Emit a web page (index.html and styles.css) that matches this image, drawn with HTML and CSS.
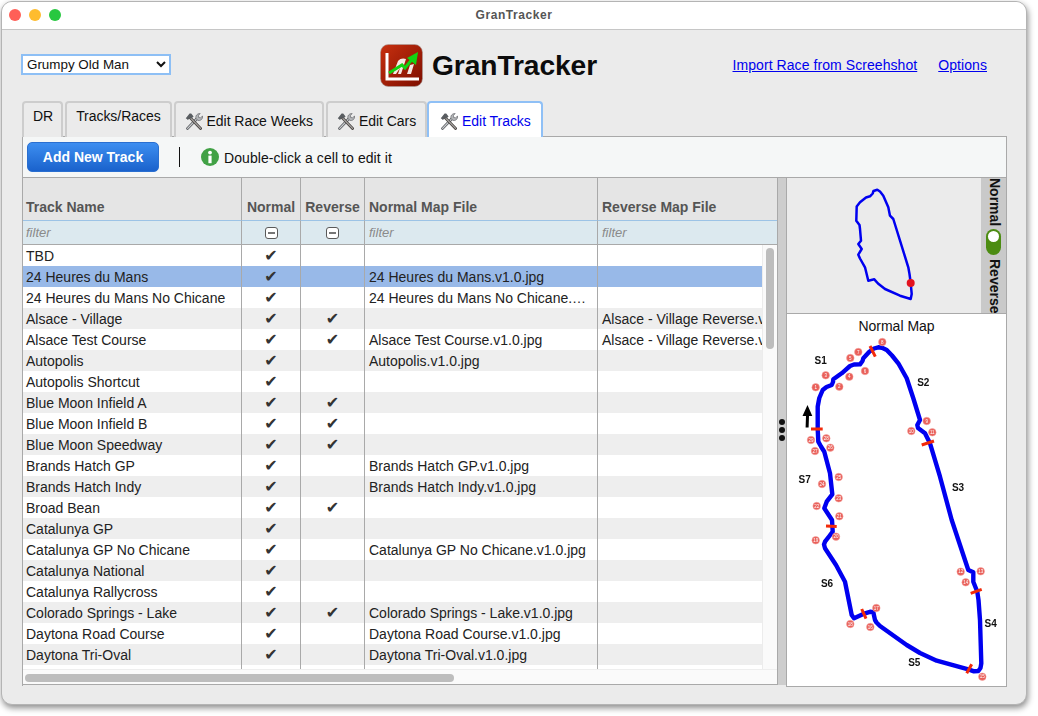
FILE: index.html
```html
<!DOCTYPE html>
<html lang="en">
<head>
<meta charset="utf-8">
<title>GranTracker</title>
<link rel="stylesheet" href="styles.css">
</head>
<body>
<svg class="defs" width="0" height="0" aria-hidden="true">
  <symbol id="tools" viewBox="0 0 18 17">
    <path d="M2.6 15.4 12.6 5" stroke="#55585c" stroke-width="2.8" stroke-linecap="round" fill="none"/>
    <path d="M2.6 15.4 12.6 5" stroke="#c9cbce" stroke-width="1.3" stroke-linecap="round" fill="none"/>
    <path d="M11 5.5c-.8-2.6 1-5 4.2-5L13.4 2.6l.4 1.8 1.8.5 1.9-2c.6 3-2 5.4-4.8 4.4z" fill="#b4b6b9" stroke="#55585c" stroke-width=".6"/>
    <path d="M5 4.5 15.6 15.4" stroke="#4a4644" stroke-width="2.8" stroke-linecap="round" fill="none"/>
    <path d="M6 5.5 15.6 15.4" stroke="#a9a6a3" stroke-width="1.1" stroke-linecap="round" fill="none"/>
    <path d="M.8 5.2 4.6.6 6.2.6 8.6 3.4 6.4 5.6 5 4.4 3 7z" fill="#595d61"/>
  </symbol>
</svg>
<div class="window">
  <header class="titlebar">
    <span class="light red"></span><span class="light yellow"></span><span class="light green"></span>
    <span class="title">GranTracker</span>
  </header>
  <main class="content">
    <div class="topbar">
      <select class="profile"><option>Grumpy Old Man</option></select>
      <div class="brand">
        <svg class="logo" viewBox="0 0 43 43" width="43" height="43" aria-hidden="true">
          <defs><linearGradient id="lg" x1="0" y1="0" x2="1" y2="1"><stop offset="0" stop-color="#c8300f"/><stop offset="1" stop-color="#7d0e00"/></linearGradient></defs>
          <rect x=".5" y=".5" width="42" height="42" rx="8" fill="url(#lg)" stroke="#a9a09c" stroke-width=".6"/>
          <path d="M7 9v26h32" fill="none" stroke="#fff" stroke-width="3"/>
          <path d="M13 30l5-13c2-3 6-3 8-2l-5 15h-3l2-6-4 6zM27 30l3-9 4-1-3 10z" fill="#f4e9e4"/>
          <path d="M9 29 22 21l3 3 8-10" fill="none" stroke="#12d312" stroke-width="3"/>
          <path d="M38 8 36 21 27 14z" fill="#12d312"/>
        </svg>
        <span class="brand-name">GranTracker</span>
      </div>
      <nav class="links">
        <a href="#">Import Race from Screehshot</a>
        <a href="#">Options</a>
      </nav>
    </div>
    <div class="tabs">
      <div class="tab short">DR</div>
      <div class="tab short">Tracks/Races</div>
      <div class="tab"><svg class="tool"><use href="#tools"/></svg>Edit Race Weeks</div>
      <div class="tab"><svg class="tool"><use href="#tools"/></svg>Edit Cars</div>
      <div class="tab active"><svg class="tool"><use href="#tools"/></svg>Edit Tracks</div>
    </div>
    <section class="panel">
      <div class="toolbar">
        <button class="add">Add New Track</button>
        <span class="sep"></span>
        <svg class="info" viewBox="0 0 18 18" width="18" height="18" aria-hidden="true">
          <circle cx="9" cy="9" r="9" fill="#41a145"/>
          <circle cx="9" cy="4.6" r="1.9" fill="#fff"/>
          <rect x="7.4" y="7.6" width="3.2" height="7.6" fill="#fff"/>
        </svg>
        <span class="hint">Double-click a cell to edit it</span>
      </div>
      <div class="split">
        <div class="grid-wrap">
          <div class="grid-view">
            <table class="grid">
              <colgroup><col class="c1"><col class="c2"><col class="c3"><col class="c4"><col class="c5"></colgroup>
              <thead>
                <tr class="heads"><th>Track Name</th><th class="mid">Normal</th><th class="mid">Reverse</th><th class="file">Normal Map File</th><th class="file">Reverse Map File</th></tr>
                <tr class="filters">
                  <td>filter</td>
                  <td class="mid"><span class="tri"></span></td>
                  <td class="mid"><span class="tri"></span></td>
                  <td class="file">filter</td>
                  <td class="file">filter</td>
                </tr>
              </thead>
              <tbody>
                <tr><td>TBD</td><td class="ck">✔</td><td class="ck"></td><td class="file"></td><td class="file"></td></tr>
                <tr class="sel"><td>24 Heures du Mans</td><td class="ck">✔</td><td class="ck"></td><td class="file">24 Heures du Mans.v1.0.jpg</td><td class="file"></td></tr>
                <tr><td>24 Heures du Mans No Chicane</td><td class="ck">✔</td><td class="ck"></td><td class="file">24 Heures du Mans No Chicane.v1.0.jpg</td><td class="file"></td></tr>
                <tr><td>Alsace - Village</td><td class="ck">✔</td><td class="ck">✔</td><td class="file"></td><td class="file">Alsace - Village Reverse.v1.0.jpg</td></tr>
                <tr><td>Alsace Test Course</td><td class="ck">✔</td><td class="ck">✔</td><td class="file">Alsace Test Course.v1.0.jpg</td><td class="file">Alsace - Village Reverse.v1.0.jpg</td></tr>
                <tr><td>Autopolis</td><td class="ck">✔</td><td class="ck"></td><td class="file">Autopolis.v1.0.jpg</td><td class="file"></td></tr>
                <tr><td>Autopolis Shortcut</td><td class="ck">✔</td><td class="ck"></td><td class="file"></td><td class="file"></td></tr>
                <tr><td>Blue Moon Infield A</td><td class="ck">✔</td><td class="ck">✔</td><td class="file"></td><td class="file"></td></tr>
                <tr><td>Blue Moon Infield B</td><td class="ck">✔</td><td class="ck">✔</td><td class="file"></td><td class="file"></td></tr>
                <tr><td>Blue Moon Speedway</td><td class="ck">✔</td><td class="ck">✔</td><td class="file"></td><td class="file"></td></tr>
                <tr><td>Brands Hatch GP</td><td class="ck">✔</td><td class="ck"></td><td class="file">Brands Hatch GP.v1.0.jpg</td><td class="file"></td></tr>
                <tr><td>Brands Hatch Indy</td><td class="ck">✔</td><td class="ck"></td><td class="file">Brands Hatch Indy.v1.0.jpg</td><td class="file"></td></tr>
                <tr><td>Broad Bean</td><td class="ck">✔</td><td class="ck">✔</td><td class="file"></td><td class="file"></td></tr>
                <tr><td>Catalunya GP</td><td class="ck">✔</td><td class="ck"></td><td class="file"></td><td class="file"></td></tr>
                <tr><td>Catalunya GP No Chicane</td><td class="ck">✔</td><td class="ck"></td><td class="file">Catalunya GP No Chicane.v1.0.jpg</td><td class="file"></td></tr>
                <tr><td>Catalunya National</td><td class="ck">✔</td><td class="ck"></td><td class="file"></td><td class="file"></td></tr>
                <tr><td>Catalunya Rallycross</td><td class="ck">✔</td><td class="ck"></td><td class="file"></td><td class="file"></td></tr>
                <tr><td>Colorado Springs - Lake</td><td class="ck">✔</td><td class="ck">✔</td><td class="file">Colorado Springs - Lake.v1.0.jpg</td><td class="file"></td></tr>
                <tr><td>Daytona Road Course</td><td class="ck">✔</td><td class="ck"></td><td class="file">Daytona Road Course.v1.0.jpg</td><td class="file"></td></tr>
                <tr><td>Daytona Tri-Oval</td><td class="ck">✔</td><td class="ck"></td><td class="file">Daytona Tri-Oval.v1.0.jpg</td><td class="file"></td></tr>
                <tr class="rest"><td></td><td></td><td></td><td></td><td></td></tr>
              </tbody>
            </table>
            <div class="vscroll"><span class="vthumb"></span></div>
          </div>
          <div class="hscroll"><span class="hthumb"></span></div>
        </div>
        <div class="gutter"><span class="dot"></span><span class="dot"></span><span class="dot"></span></div>
        <aside class="maps">
          <div class="mini">
            <svg class="mini-track" viewBox="787 179 194 134" aria-hidden="true">
              <path class="route-thin" d="M910.7 284 909.5 275 908.3 268.3 893.3 220 890 216.7 888.3 208.3 883.3 196.7 880 192.5 877.3 190.7 873.5 192 872.7 194.5 870 197.3 866 198.5 860 203.3 856.7 207.5 856.3 221.7 859.5 226 860 230 861 241.7 858.3 245 861.7 250 858.3 255.7 860 259.5 865 268.3 868.3 281.7 874.3 280.3 878 284.5 885 290 900 296.7 910.7 300 911.7 295z"/>
              <circle cx="910.7" cy="284" r="4" fill="#e3121e"/>
            </svg>
            <div class="toggle">
              <span class="rot n">Normal</span>
              <span class="pill"><span class="knob"></span></span>
              <span class="rot">Reverse</span>
            </div>
          </div>
          <div class="big">
            <div class="map-title">Normal Map</div>
            <svg class="big-track" viewBox="787 336 220 350" aria-hidden="true">
              <path class="route" d="M817.7 429V406.7L819.3 398 822.7 390 826.5 387 831.7 385 833 382 833.3 379.3 841.7 373.3 850 366 854 364.5 860 364.3 862.5 361 863.3 358.3 869.3 351.7 874 348.5 878.3 347.3 882 347.8 886.7 350 892 355.5 898.3 363.3 906.7 378.3 913.3 398.3 920 420 917.3 425 918 428 925 433.3 930 443.3 940 476.7 951.7 520 968.3 570 973.3 572.3 973.3 581.7 977.3 591.7 978.5 600 980 620 981.3 663.3 980.5 668 978.3 671 974 671.3 968.3 669.3 936.7 660.7 920 653 906.7 645 880 626 876.5 622.5 875 620 873.3 612.3 870 611.8 865 613.3 854 618.3 851.7 615 845 581.7 836 565 825 548.3 824 544.5 825 541.7 829 536.5 832.7 531.7 832 520 824.3 508.3 826.7 501.7 832.3 494.3 830 473.3 824.3 451.7 821 446.5 818.3 441.7z"/>
              <g class="bars">
                <path d="M811 429H822.7M870 346 875.3 356.7M921.7 445 934 441M826 526 836.7 526.5M970.7 593.3 981.7 589.3M966.7 673.3 971.7 664.3M861.7 609 866 618.7"/>
              </g>
              <path d="M805.6 427.5 806 416H802.5L807.5 405 812.3 416H809L808.6 427.5z" fill="#000"/>
              <g class="pins">
                <circle cx="815.7" cy="387.3" r="3.8"/><circle cx="839.3" cy="386.7" r="3.8"/><circle cx="825.7" cy="375.3" r="3.8"/><circle cx="849.3" cy="376.7" r="3.8"/><circle cx="850.3" cy="358" r="3.8"/><circle cx="865" cy="371" r="3.8"/><circle cx="858.3" cy="352" r="3.8"/><circle cx="882.3" cy="342" r="3.8"/><circle cx="926.7" cy="421" r="3.8"/><circle cx="911.3" cy="431" r="3.8"/><circle cx="932.3" cy="432.3" r="3.8"/><circle cx="960.7" cy="571.7" r="3.8"/><circle cx="980.7" cy="571.3" r="3.8"/><circle cx="965.7" cy="582.3" r="3.8"/><circle cx="982.3" cy="676.7" r="3.8"/><circle cx="870.3" cy="627" r="3.8"/><circle cx="876.3" cy="608" r="3.8"/><circle cx="850.3" cy="624" r="3.8"/><circle cx="815.7" cy="540.3" r="3.8"/><circle cx="836" cy="536.7" r="3.8"/><circle cx="839.3" cy="516.3" r="3.8"/><circle cx="816.7" cy="506" r="3.8"/><circle cx="838.7" cy="498.3" r="3.8"/><circle cx="822" cy="484" r="3.8"/><circle cx="838.7" cy="477" r="3.8"/><circle cx="830.3" cy="447.7" r="3.8"/><circle cx="815" cy="451" r="3.8"/><circle cx="826.3" cy="438.3" r="3.8"/><circle cx="811" cy="440" r="3.8"/>
              </g>
              <g class="pin-nums">
                <text x="815.7" y="389">1</text><text x="839.3" y="388.4">2</text><text x="825.7" y="377">3</text><text x="849.3" y="378.4">4</text><text x="850.3" y="359.7">5</text><text x="865" y="372.7">6</text><text x="858.3" y="353.7">7</text><text x="882.3" y="343.7">8</text><text x="926.7" y="422.7">9</text><text x="911.3" y="432.7">10</text><text x="932.3" y="434">11</text><text x="960.7" y="573.4">12</text><text x="980.7" y="573">13</text><text x="965.7" y="584">14</text><text x="982.3" y="678.4">15</text><text x="870.3" y="628.7">16</text><text x="876.3" y="609.7">17</text><text x="850.3" y="625.7">18</text><text x="815.7" y="542">19</text><text x="836" y="538.4">20</text><text x="839.3" y="518">21</text><text x="816.7" y="507.7">22</text><text x="838.7" y="500">23</text><text x="822" y="485.7">24</text><text x="838.7" y="478.7">25</text><text x="830.3" y="449.4">26</text><text x="815" y="452.7">27</text><text x="826.3" y="440">28</text><text x="811" y="441.7">29</text>
              </g>
              <g class="sectors">
                <text x="820.7" y="363.5">S1</text><text x="923.3" y="386.2">S2</text><text x="958" y="490.8">S3</text><text x="990.7" y="626.8">S4</text><text x="914.3" y="665.8">S5</text><text x="827" y="586.8">S6</text><text x="804.7" y="482.5">S7</text>
              </g>
            </svg>
          </div>
        </aside>
      </div>
    </section>
  </main>
</div>
</body>
</html>
```
FILE: styles.css
```css
* { box-sizing: border-box; }
html, body { margin: 0; height: 100%; }
body { padding: 1px 0 0 1px; background: #fff; font-family: "Liberation Sans", Arial, sans-serif; overflow: hidden; }
.defs { position: absolute; }

.window {
  width: 1026px; height: 704px; display: flex; flex-direction: column;
  background: #ebebeb; border: 1px solid #b4b4b4; border-radius: 11px; overflow: hidden;
  box-shadow: 1px 3px 6px rgba(0, 0, 0, .45);
}
.titlebar {
  height: 28px; flex: none; display: flex; align-items: center; gap: 8px; padding: 0 0 2px 7px;
  background: #fff; border-bottom: 1px solid #c6c6c6; position: relative;
}
.light { width: 12px; height: 12px; border-radius: 50%; }
.red { background: #ff5f57; }
.yellow { background: #febc2e; }
.green { background: #28c840; }
.title { position: absolute; left: 0; right: 0; text-align: center; font-size: 12px; font-weight: bold; color: #555; letter-spacing: .55px; }

.content { flex: 1; display: flex; flex-direction: column; padding: 14px 19px 0 20px; min-height: 0; }

.topbar { display: flex; align-items: center; height: 43px; flex: none; }
.profile {
  width: 150px; height: 21px; margin: -2px 0 0 -1px; padding: 0; background: #fff; border: 2px solid #8dbff5; border-radius: 0;
  font: 13.4px "Liberation Sans", Arial, sans-serif; color: #111;
}
.brand { display: flex; align-items: center; gap: 9px; margin-left: 209px; }
.logo { display: block; }
.brand-name { font-size: 28.2px; font-weight: bold; color: #0c0c0c; letter-spacing: -.1px; }
.links { margin-left: auto; margin-right: 20px; display: flex; gap: 21px; font-size: 14px; letter-spacing: .07px; margin-top: -2px; }
.links a { color: #0000ee; }

.tabs { display: flex; gap: 2px; height: 36px; margin-top: 14px; flex: none; position: relative; z-index: 1; }
.tab {
  display: flex; align-items: center; gap: 4px; height: 36px; padding: 2px 9px 0 9px; font-size: 14px; color: #111; letter-spacing: -.05px;
  border: 2px solid #cdcdcd; border-bottom: 0; border-radius: 4px 4px 0 0; background: #ebebeb;
}
.short { padding: 0 9px 8px; }
.tab:first-child { padding-right: 8px; }
.active { background: #fff; border-color: #8fc0f6; color: #0000ee; padding-left: 11px; padding-right: 10px; margin-left: -2px; }
.tool { width: 18px; height: 17px; }

.panel { height: 550px; flex: none; display: flex; flex-direction: column; border: 1px solid #a9a9a9; border-bottom: 0; margin-top: -1px; }
.toolbar { height: 41px; flex: none; display: flex; align-items: center; padding: 0 0 0 4px; background: #f5f7f7; border-bottom: 1px solid #a9a9a9; }
.add {
  width: 132px; height: 30px; padding: 0; color: #fff; font: bold 14px "Liberation Sans", Arial, sans-serif;
  background: linear-gradient(#3d8ef0, #1a62cc); border: 1px solid #2a6fd0; border-radius: 5px;
}
.sep { width: 1px; height: 20px; background: #111; margin: 0 20px; }
.info { margin: 0 5px 0 1px; }
.hint { font-size: 14px; color: #111; letter-spacing: .07px; position: relative; top: 1px; }

.split { flex: 1; min-height: 0; display: flex; align-items: stretch; }
.grid-wrap { flex: none; width: 756px; height: 507px; margin-left: -1px; display: flex; flex-direction: column; border: 1px solid #a9a9a9; border-top: 0; background: #fff; overflow: hidden; }
.grid-view { position: relative; flex: 1; min-height: 0; overflow: hidden; }
.grid { width: 754px; table-layout: fixed; border-collapse: separate; border-spacing: 0; font-size: 14px; color: #222; }
.c1 { width: 219px; } .c2 { width: 59px; } .c3 { width: 64px; } .c4 { width: 233px; } .c5 { width: 179px; }
.grid th, .grid td {
  padding: 0 8px 0 3px; border-right: 1px solid #a9a9a9; white-space: nowrap; overflow: hidden; text-overflow: ellipsis; text-align: left;
}
.grid .file { padding-left: 4px; }
.grid th:last-child, .grid td:last-child { border-right: 0; text-overflow: clip; padding-right: 0; }
.heads th { height: 42px; background: #e5e5e5; color: #555; font-weight: bold; vertical-align: bottom; padding-bottom: 5px; }
.filters td { height: 25px; background: #dce9ef; color: #8a8a8a; font-style: italic; font-size: 13px; border-top: 1px solid #9cc3e6; border-bottom: 1px solid #a9a9a9; }
.grid .mid { text-align: center; padding-left: 0; padding-right: 0; }
.tri { display: inline-block; position: relative; width: 13px; height: 12px; margin-top: 3px; border: 1px solid #5a5a5a; border-radius: 3px; background: #fff; }
.tri::after { content: ""; position: absolute; left: 2px; right: 2px; top: 4px; height: 2px; background: #777; }
.grid tbody td { height: 21px; }
.grid tbody tr:nth-child(even) td { background: #eee; }
.grid tbody tr.sel td { background: #98b9e8; }
.grid tbody tr.rest td { height: 4px; background: #fff; line-height: 0; }
.grid .ck { text-align: center; padding: 0; font: 16px "DejaVu Sans", sans-serif; color: #333; }

.vscroll { position: absolute; right: 0; top: 67px; width: 15px; bottom: 0; background: #fafafa; border-left: 1px solid #ececec; }
.vthumb { display: block; margin: 3px 0 0 3px; width: 8px; height: 101px; border-radius: 4px; background: #bdbdbd; }
.hscroll { flex: none; height: 15px; background: #fafafa; padding: 4px 0 0 2px; border-top: 1px solid #eee; }
.hthumb { display: block; width: 429px; height: 8px; border-radius: 4px; background: #bdbdbd; }

.gutter { width: 8px; height: 507px; flex: none; background: #cdcdcd; display: flex; flex-direction: column; align-items: center; gap: 2px; padding-top: 241px; }
.dot { width: 6px; height: 6px; border-radius: 50%; background: #111; flex: none; }

.maps { width: 221px; height: 509px; flex: none; display: flex; flex-direction: column; border: 1px solid #a9a9a9; border-top: 0; }
.mini { height: 136px; flex: none; display: flex; background: #ebebeb; border-bottom: 1px solid #a9a9a9; }
.mini-track { flex: 1; height: 134px; display: block; }
.route-thin { fill: none; stroke: #0000f0; stroke-width: 2.5; stroke-linejoin: round; }
.toggle { width: 25px; height: 135px; flex: none; background: #c9c9c9; display: flex; flex-direction: column; align-items: center; color: #111; overflow: hidden; }
.rot { writing-mode: vertical-rl; font-size: 14px; font-weight: bold; line-height: 25px; height: 54px; margin-left: 1px; }
.rot.n { height: 46px; }
.pill { width: 15px; height: 26px; margin: 5px 0 4px; border-radius: 8px; background: #4c8c12; padding: 2px; display: block; flex: none; }
.knob { display: block; width: 11px; height: 11px; border-radius: 50%; background: #fff; }

.big { flex: 1; min-height: 0; background: #fff; display: flex; flex-direction: column; overflow: hidden; }
.map-title { height: 22px; flex: none; text-align: center; font-size: 14px; line-height: 24px; color: #111; }
.big-track { width: 220px; height: 350px; display: block; filter: blur(.3px); }
.route { fill: none; stroke: #0000f0; stroke-width: 4.4; stroke-linejoin: round; }
.bars path { fill: none; stroke: #f22a0a; stroke-width: 3; }
.pins circle { fill: #e9605a; stroke: #f3a5a0; stroke-width: .5; }
.pin-nums text { font: 4.5px "Liberation Sans", Arial, sans-serif; fill: #fff; text-anchor: middle; }
.sectors text { font: bold 10px "Liberation Sans", Arial, sans-serif; fill: #111; text-anchor: middle; }
```
